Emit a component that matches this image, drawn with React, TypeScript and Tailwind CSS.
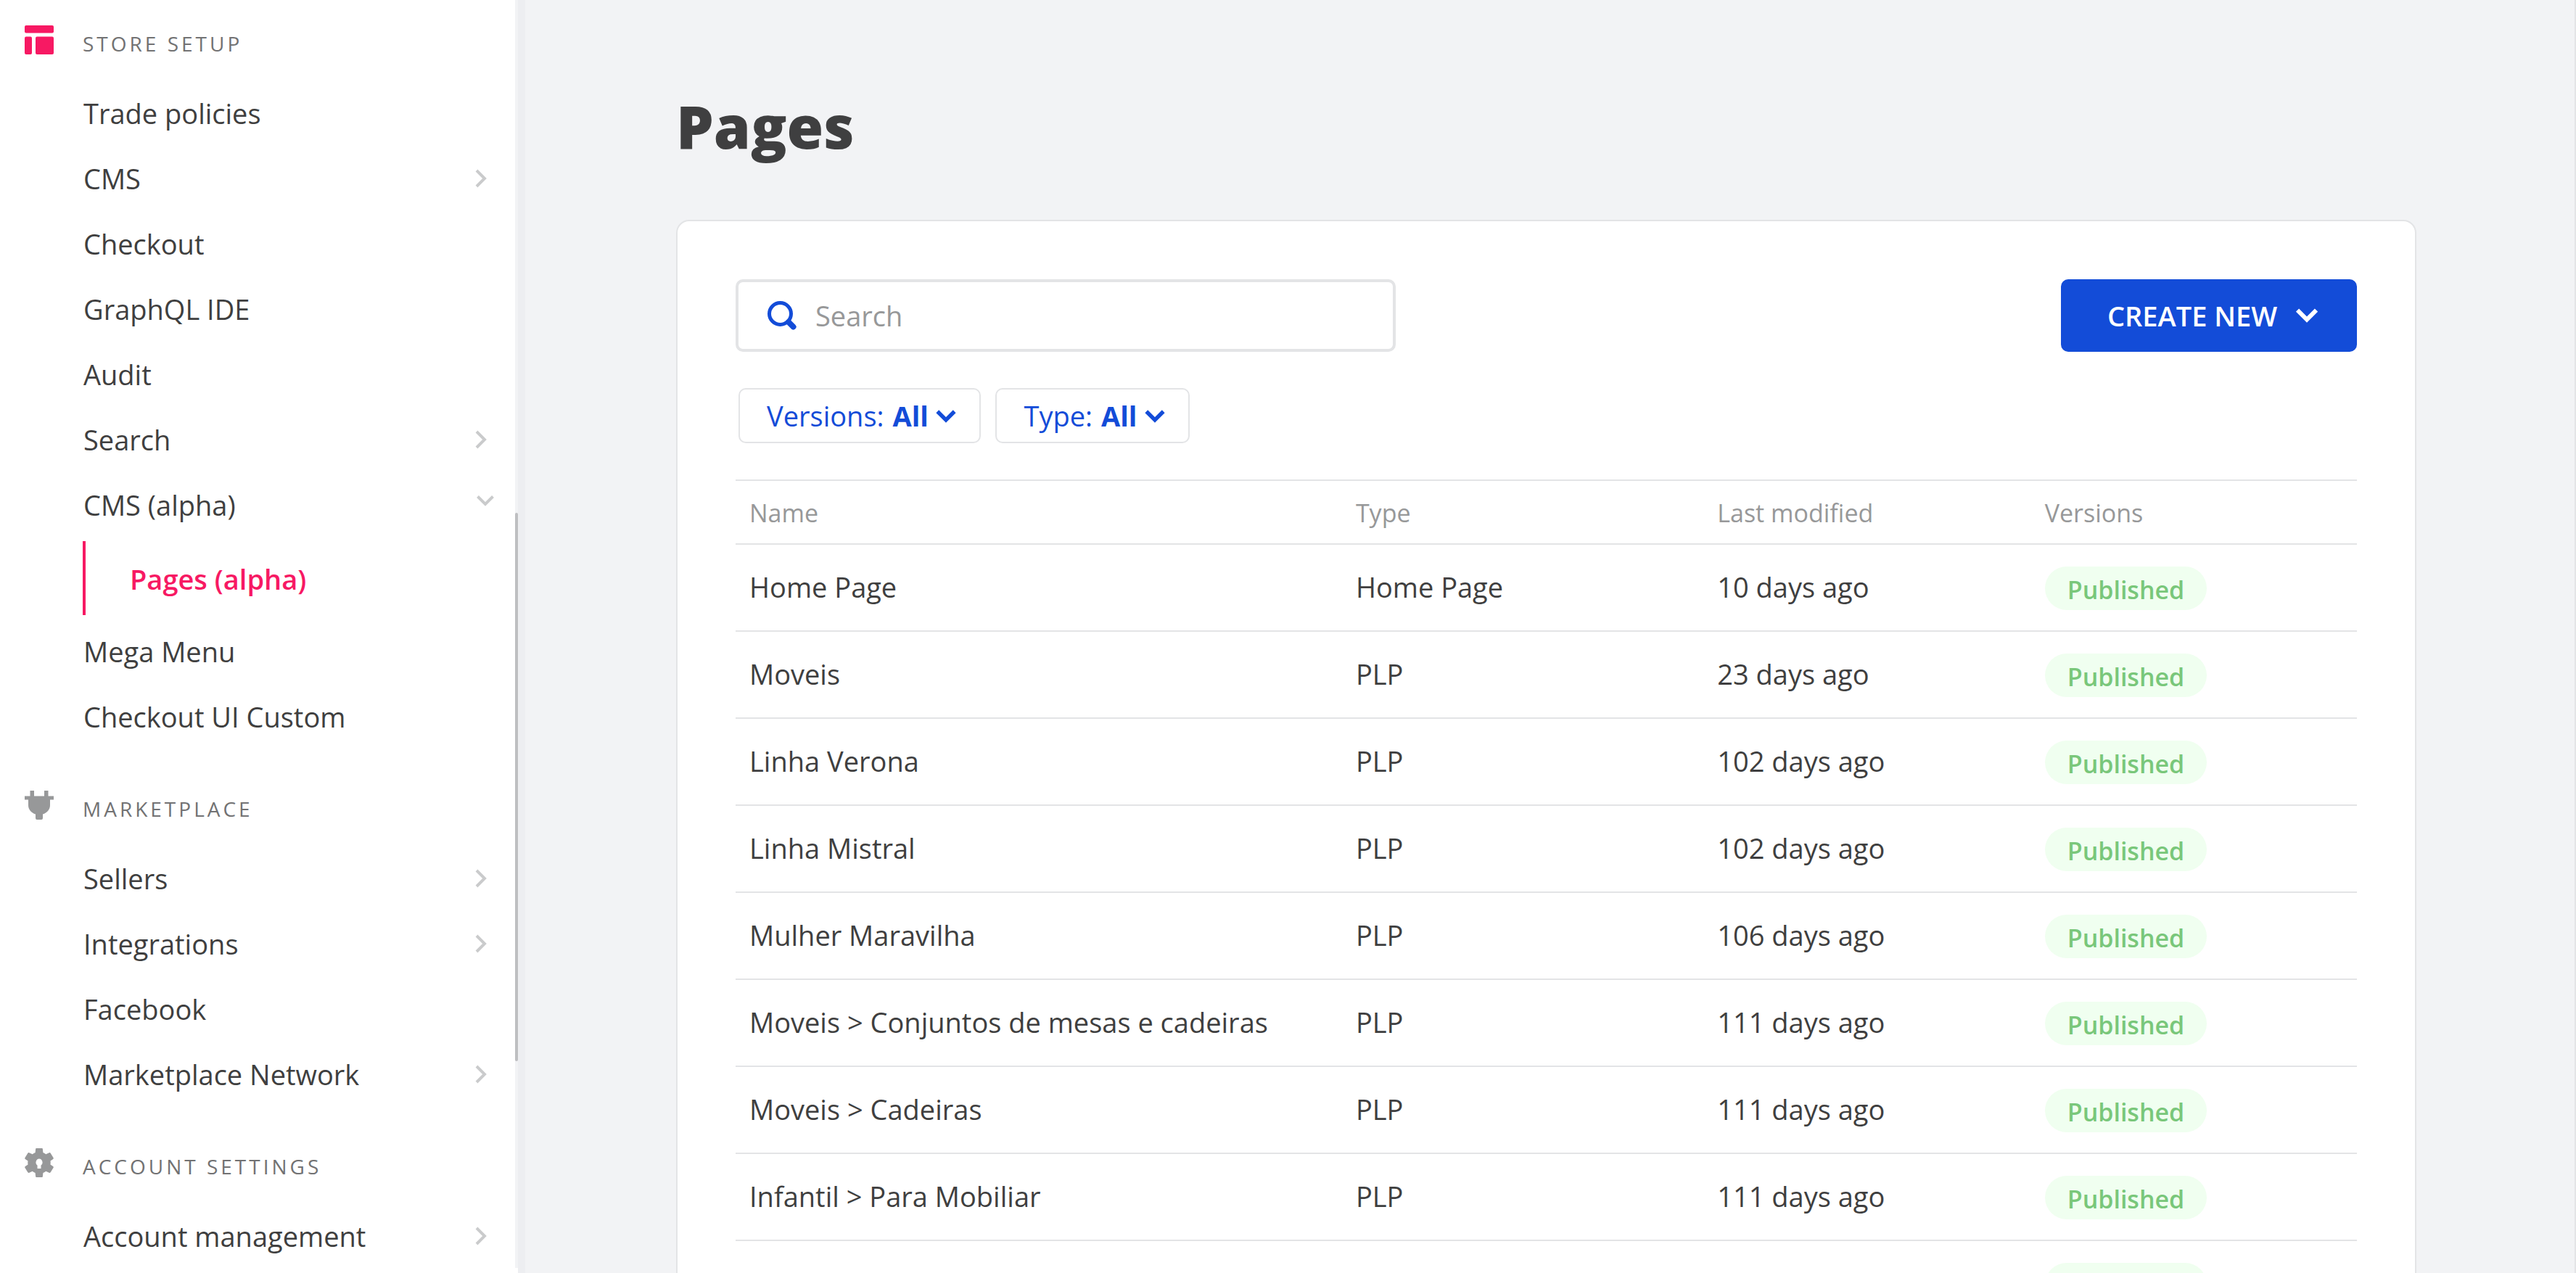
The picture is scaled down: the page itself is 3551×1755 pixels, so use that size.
import React from 'react'

type Item = { label: string; arrow?: boolean; open?: boolean; child?: string }
type Section = { title: string; icon: React.ReactNode; items: Item[] }

const LayoutIcon = () => (
  <svg viewBox="0 0 40 40" className="size-10 text-[#f71963]" fill="currentColor" aria-hidden="true">
    <rect x="0" y="0" width="40" height="10.5" rx="2" />
    <rect x="0" y="15.5" width="10" height="24.5" rx="2" />
    <rect x="15" y="15.5" width="25" height="24.5" rx="2" />
  </svg>
)

const PlugIcon = () => (
  <svg viewBox="0 0 40 40" className="size-10 text-[#979899]" fill="currentColor" aria-hidden="true">
    <path d="M7.5 0H13V7.5H27V0H32.5V7.5H40V12.5H35V20C35 26 31 30.500 25 32.500V38a2 2 0 0 1-2 2H17a2 2 0 0 1-2-2V32.500C9 30.500 5 26 5 20V12.500H0V7.500H7.500Z" />
  </svg>
)

const GearIcon = () => (
  <svg viewBox="0 0 40 40" className="size-10 text-[#979899]" fill="currentColor" fillRule="evenodd" aria-hidden="true">
    <path d="M16.500 0H23.500C24.500 0 24.800 .5 24.900 1.300L25.400 6C26.800 6.500 28.100 7.300 29.300 8.200L33.700 6.300C34.600 5.900 35.300 6.100 35.800 6.900L39.500 13C40 13.800 39.800 14.500 39.200 15L35.500 17.500C35.800 19.200 35.800 20.800 35.500 22.500L39.200 25C39.800 25.500 40 26.200 39.500 27L35.800 33.100C35.300 33.900 34.600 34.100 33.700 33.700L29.300 31.800C28.100 32.700 26.800 33.500 25.400 34L24.900 38.700C24.800 39.500 24.500 40 23.500 40H16.500C15.500 40 15.200 39.500 15.100 38.700L14.600 34C13.200 33.500 11.900 32.700 10.700 31.800L6.300 33.700C5.400 34.100 4.700 33.900 4.200 33.100L.5 27C0 26.200 .2 25.500 .8 25L4.500 22.500C4.200 20.800 4.200 19.200 4.500 17.500L.8 15C.2 14.500 0 13.800 .5 13L4.200 6.900C4.700 6.100 5.400 5.900 6.300 6.300L10.700 8.200C11.900 7.300 13.200 6.500 14.600 6L15.100 1.300C15.200 .5 15.500 0 16.500 0ZM20 14.500A5 5 0 0 0 17.500 23.500V28H22.500V23.500A5 5 0 0 0 20 14.500Z" />
  </svg>
)

const ChevronRight = () => (
  <svg viewBox="0 0 16 26" className="mr-[39px] h-[26px] w-4 text-[#cacbcc]" fill="none" stroke="currentColor" strokeWidth="4" aria-hidden="true">
    <path d="M2 2L13 13L2 24" />
  </svg>
)

const ChevronDown = () => (
  <svg viewBox="0 0 24 16" className="mr-[29px] mb-3 h-4 w-6 text-[#cacbcc]" fill="none" stroke="currentColor" strokeWidth="4" aria-hidden="true">
    <path d="M1.500 2.500L12 13L22.500 2.500" />
  </svg>
)

const BoldChevron = ({ className }: { className: string }) => (
  <svg viewBox="0 0 30 20" className={className} fill="none" stroke="currentColor" strokeWidth="6" aria-hidden="true">
    <path d="M2 2.500L15 15.500L28 2.500" />
  </svg>
)

const SearchIcon = () => (
  <svg viewBox="0 0 40 40" className="size-10 shrink-0 text-[#134cd8]" fill="none" stroke="currentColor" aria-hidden="true">
    <circle cx="17.500" cy="17.500" r="15" strokeWidth="5" />
    <path d="M29 29L35.500 35.500" strokeWidth="8" strokeLinecap="round" />
  </svg>
)

const sections: Section[] = [
  {
    title: 'STORE SETUP',
    icon: <LayoutIcon />,
    items: [
      { label: 'Trade policies' },
      { label: 'CMS', arrow: true },
      { label: 'Checkout' },
      { label: 'GraphQL IDE' },
      { label: 'Audit' },
      { label: 'Search', arrow: true },
      { label: 'CMS (alpha)', open: true, child: 'Pages (alpha)' },
      { label: 'Mega Menu' },
      { label: 'Checkout UI Custom' },
    ],
  },
  {
    title: 'MARKETPLACE',
    icon: <PlugIcon />,
    items: [
      { label: 'Sellers', arrow: true },
      { label: 'Integrations', arrow: true },
      { label: 'Facebook' },
      { label: 'Marketplace Network', arrow: true },
    ],
  },
  {
    title: 'ACCOUNT SETTINGS',
    icon: <GearIcon />,
    items: [{ label: 'Account management', arrow: true }],
  },
]

const rows = [
  ['Home Page', 'Home Page', '10 days ago'],
  ['Moveis', 'PLP', '23 days ago'],
  ['Linha Verona', 'PLP', '102 days ago'],
  ['Linha Mistral', 'PLP', '102 days ago'],
  ['Mulher Maravilha', 'PLP', '106 days ago'],
  ['Moveis > Conjuntos de mesas e cadeiras', 'PLP', '111 days ago'],
  ['Moveis > Cadeiras', 'PLP', '111 days ago'],
  ['Infantil > Para Mobiliar', 'PLP', '111 days ago'],
  ['Cozinha', 'PLP', '111 days ago'],
]

function NavItem({ item }: { item: Item }) {
  const row = 'flex h-[90px] w-full items-center justify-between pt-0.5 pl-[115px] text-left text-[38px]'
  return (
    <li>
      {item.arrow || item.open ? (
        <button type="button" aria-expanded={!!item.open} className={row}>
          <span>{item.label}</span>
          {item.open ? <ChevronDown /> : <ChevronRight />}
        </button>
      ) : (
        <a href="#" className={row}>
          {item.label}
        </a>
      )}
      {item.child && (
        <a
          href="#"
          aria-current="page"
          className="mt-1.5 mb-1 ml-[114px] flex h-[102px] items-center border-l-4 border-[#f71963] pt-0.5 pl-[61px] text-[38px] font-semibold text-[#f71963]"
        >
          {item.child}
        </a>
      )}
    </li>
  )
}

function Filter({ id, label }: { id: string; label: string }) {
  return (
    <div className="flex h-[76px] items-center rounded-[10px] border-2 border-[#e3e4e6] pr-8 pl-[37px] text-[38px] text-[#134cd8]">
      <label htmlFor={id}>{label}:</label>
      <select id={id} className="mr-2.5 ml-3 appearance-none bg-transparent font-bold outline-none">
        <option>All</option>
      </select>
      <BoldChevron className="mt-0.5 h-[18px] w-7" />
    </div>
  )
}

export default function App() {
  return (
    <div className="flex h-screen overflow-hidden border-r-2 border-[#e3e4e6] bg-[#f2f3f5] font-['Open_Sans',sans-serif] text-[#3f3f40]">
      <aside className="relative w-[724px] shrink-0 overflow-hidden border-r-[10px] border-[#edeef1] bg-white">
        <nav className="border-r-4 border-[#f2f3f5]">
          {sections.map((s) => (
            <section key={s.title} className="pt-[58px] first:pt-[35px]">
              <div className="mb-[30px] flex items-start gap-10 pl-[34px]">
                {s.icon}
                <h2 className="pt-[5px] text-[28px] leading-10 tracking-[4px] text-[#727273]">{s.title}</h2>
              </div>
              <ul>
                {s.items.map((i) => (
                  <NavItem key={i.label} item={i} />
                ))}
              </ul>
            </section>
          ))}
        </nav>
        <div className="absolute top-[707px] right-0 h-[756px] w-1 rounded-full bg-[#bebfc1]" />
      </aside>

      <main className="min-w-0 flex-1 pt-[125px] pr-[218px] pl-52">
        <h1 className="mb-[82px] text-[82px] leading-24 font-extrabold">Pages</h1>

        <div className="rounded-[18px] border-2 border-[#e3e4e6] bg-white p-20">
          <div className="flex items-center justify-between gap-8">
            <div className="flex h-[100px] w-[910px] items-center gap-[26px] rounded-[10px] border-4 border-[#e3e4e6] px-10">
              <SearchIcon />
              <input
                type="search"
                aria-label="Search"
                placeholder="Search"
                className="min-w-0 flex-1 bg-transparent text-[38px] outline-none placeholder:text-[#979899]"
              />
            </div>
            <button
              type="button"
              className="flex h-[100px] w-[408px] items-center justify-between rounded-[10px] bg-[#134cd8] pr-[54px] pl-[64px] text-[38px] font-semibold text-white"
            >
              CREATE NEW
              <BoldChevron className="h-5 w-[30px]" />
            </button>
          </div>

          <div className="mt-[50px] ml-1 flex gap-5">
            <Filter id="versions-filter" label="Versions" />
            <Filter id="type-filter" label="Type" />
          </div>

          <table className="mt-[50px] w-full table-fixed border-separate border-spacing-0 text-left">
            <colgroup>
              <col className="w-[37.4%]" />
              <col className="w-[22.3%]" />
              <col className="w-[20.2%]" />
              <col className="w-[20.1%]" />
            </colgroup>
            <thead>
              <tr className="h-[90px] text-[34px] text-[#979899]">
                {['Name', 'Type', 'Last modified', 'Versions'].map((h) => (
                  <th key={h} scope="col" className="border-y-2 border-[#e3e4e6] px-[19px] pt-0.5 pb-0 font-normal">
                    {h}
                  </th>
                ))}
              </tr>
            </thead>
            <tbody>
              {rows.map((r) => (
                <tr key={r[0]} className="h-[120px] text-[38px]">
                  {r.map((c, i) => (
                    <td key={i} className="border-b-2 border-[#e3e4e6] px-[19px] pt-0 pb-0.5 whitespace-nowrap">
                      {c}
                    </td>
                  ))}
                  <td className="border-b-2 border-[#e3e4e6] px-[19px] pt-0.5 pb-0">
                    <span className="flex h-[60px] w-fit items-center rounded-full bg-[#f0fff0] px-[31px] pt-1 text-[34px] font-semibold text-[#79c77a]">
                      Published
                    </span>
                  </td>
                </tr>
              ))}
            </tbody>
          </table>
        </div>
      </main>
    </div>
  )
}
